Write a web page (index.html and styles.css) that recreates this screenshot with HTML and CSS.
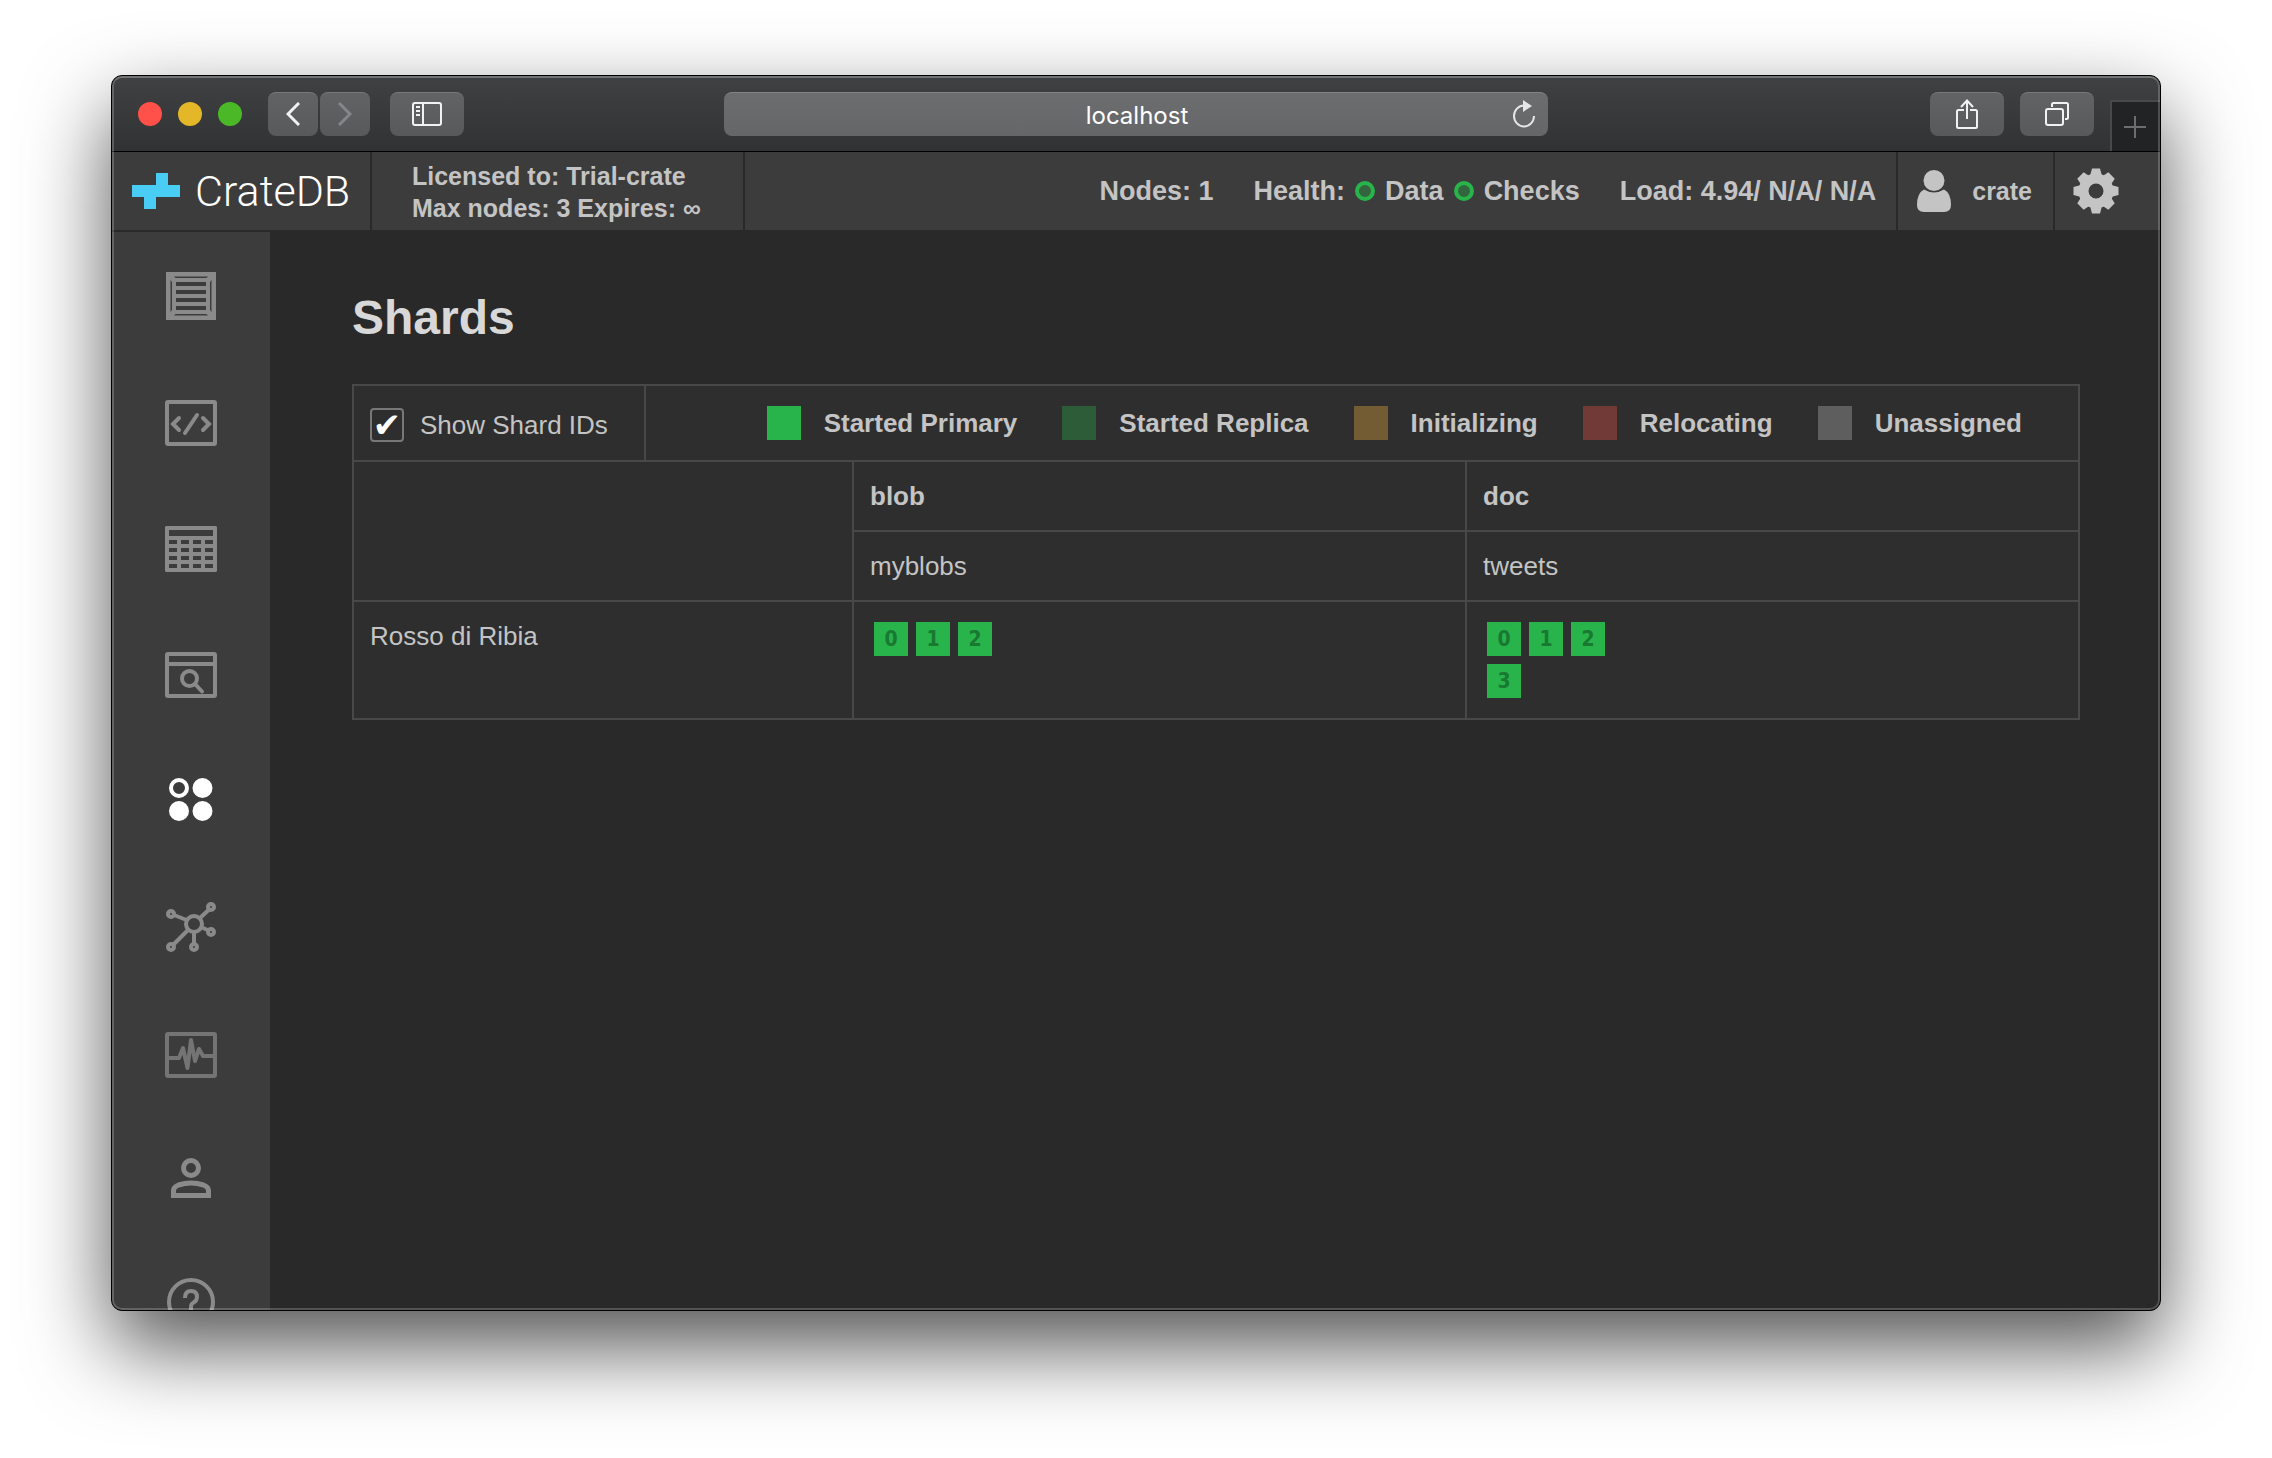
FILE: index.html
```html
<!DOCTYPE html>
<html lang="en">
<head>
<meta charset="utf-8">
<title>Shards - CrateDB</title>
<link rel="stylesheet" href="styles.css">
</head>
<body>
<div class="window">
  <div class="toolbar">
    <div class="toolbar-left">
      <div class="lights">
        <button class="light light-close" aria-label="Close"></button>
        <button class="light light-min" aria-label="Minimize"></button>
        <button class="light light-max" aria-label="Zoom"></button>
      </div>
      <div class="nav-pair">
        <button class="tool tool-nav" aria-label="Back">
          <svg width="14" height="24" viewBox="0 0 14 24" fill="none" stroke="#f2f2f2" stroke-width="3"><path d="M13 1 2 12l11 11"/></svg>
        </button>
        <button class="tool tool-nav" aria-label="Forward" disabled>
          <svg width="14" height="24" viewBox="0 0 14 24" fill="none" stroke="#85868a" stroke-width="3"><path d="M1 1l11 11L1 23"/></svg>
        </button>
      </div>
      <button class="tool" aria-label="Show sidebar">
        <svg width="30" height="24" viewBox="0 0 30 24" fill="none" stroke="#f2f2f2" stroke-width="2"><rect x="1" y="1" width="28" height="22" rx="2"/><path d="M11 1v22M4 5h4M4 9h4M4 13h4"/></svg>
      </button>
    </div>
    <div class="address">
      <input class="address-input" type="text" value="localhost" aria-label="Address">
      <button class="reload" aria-label="Reload">
        <svg width="24" height="30" viewBox="0 0 24 30"><path d="M12 6.500A10 10.500 0 1 0 22 17" fill="none" stroke="#e6e6e6" stroke-width="2"/><path d="M11 1l9 6-9 6z" fill="#e6e6e6"/></svg>
      </button>
    </div>
    <div class="toolbar-right">
      <button class="tool" aria-label="Share">
        <svg width="24" height="32" viewBox="0 0 24 32" fill="none" stroke="#f2f2f2" stroke-width="2"><path d="M9 12H3.500Q2 12 2 13.500V28.500Q2 30 3.500 30h17q1.500 0 1.500-1.500V13.500Q22 12 20.500 12H15M12 21V3M6 9l6-6.500L18 9"/></svg>
      </button>
      <button class="tool" aria-label="Show tabs">
        <svg width="26" height="26" viewBox="0 0 26 26" fill="none" stroke="#f2f2f2" stroke-width="2"><rect x="2" y="8" width="17" height="16" rx="2"/><path d="M8 6V3.500Q8 2 9.500 2h13Q24 2 24 3.500v13q0 1.500-1.500 1.500H21"/></svg>
      </button>
      <button class="new-tab" aria-label="New tab">
        <svg width="22" height="22" viewBox="0 0 22 22" stroke="#6c6d6f" stroke-width="2"><path d="M11 0v22M0 11h22"/></svg>
      </button>
    </div>
  </div>

  <header class="header">
    <a class="brand" href="#">
      <svg width="48" height="36" viewBox="0 0 48 36" fill="#49cdf4"><path d="M24 0h12v12h12v12H24v12H12V24H0V12h24z"/></svg>
      <span class="brand-name">CrateDB</span>
    </a>
    <div class="license">
      <div>Licensed to: Trial-crate</div>
      <div>Max nodes: 3 Expires: ∞</div>
    </div>
    <div class="status">
      <span>Nodes: 1</span>
      <span class="health">Health: <i class="ring"></i> Data <i class="ring"></i> Checks</span>
      <span>Load: 4.94/ N/A/ N/A</span>
    </div>
    <button class="user">
      <svg width="36" height="42" viewBox="0 0 36 42" fill="#c4c4c4"><ellipse cx="18" cy="10.500" rx="10.500" ry="10.500"/><path d="M8 19.500Q18 25.500 28 19.500Q35 23 35 35q0 7-7 7H8q-7 0-7-7Q1 23 8 19.500z"/></svg>
      crate
    </button>
    <button class="settings" aria-label="Settings">
      <svg width="46" height="46" viewBox="-23 -23 46 46" fill="#c4c4c4"><circle r="12.500" fill="none" stroke="#c4c4c4" stroke-width="10"/><path d="M-6-15l2-7.500h8l2 7.500zM-6 15l2 7.500h8l2-7.500zM-15-6l-7.500 2v8l7.500 2zM15-6l7.500 2v8l-7.500 2z"/><path transform="rotate(45)" d="M-6-15l1.500-7h9l1.500 7zM-6 15l1.500 7h9l1.500-7zM-15-6l-7 1.500v9l7 1.500zM15-6l7 1.500v9l-7 1.500z"/></svg>
    </button>
  </header>

  <div class="body">
    <nav class="sidebar" aria-label="Main">
      <a class="nav-item" href="#" aria-label="Overview">
        <svg class="icon" viewBox="0 0 54 54"><path fill="currentColor" fill-rule="evenodd" d="M2 3h50v48H2zM10 7.500l1.500 1.500h31l1.500-1.500zM6.500 11v32l1.500-2V13zM47.500 11l-1.500 2v28l1.500 2zM11.500 45l-1.500 1.500h34l-1.500-1.500zM12 13v4h30v-4zM12 21v4h30v-4zM12 29v4h30v-4zM12 37v4h30v-4z"/></svg>
      </a>
      <a class="nav-item" href="#" aria-label="Console">
        <svg class="icon line" viewBox="0 0 54 54"><rect x="3" y="7" width="48" height="42" rx="1"/><path stroke-linecap="round" d="M15 23l-6 6 6 6M33 20L21 38M39 23l6 6-6 6"/></svg>
      </a>
      <a class="nav-item" href="#" aria-label="Tables">
        <svg class="icon" viewBox="0 0 54 54"><path fill="currentColor" fill-rule="evenodd" d="M2 5h50l1 1v44l-1 1H2l-1-1V6zM5 9v6h44V9zM5 19v4h8v-4zM17 19v4h8v-4zM29 19v4h8v-4zM41 19v4h8v-4zM5 27v4h8v-4zM17 27v4h8v-4zM29 27v4h8v-4zM41 27v4h8v-4zM5 35v4h8v-4zM17 35v4h8v-4zM29 35v4h8v-4zM41 35v4h8v-4zM5 43v4h8v-4zM17 43v4h8v-4zM29 43v4h8v-4zM41 43v4h8v-4z"/></svg>
      </a>
      <a class="nav-item" href="#" aria-label="Views">
        <svg class="icon line" viewBox="0 0 54 54"><rect x="3" y="7" width="48" height="42" rx="1"/><path d="M3 17h48"/><circle cx="25.500" cy="31.500" r="7.500"/><path stroke-linecap="round" d="M31 37l7 7.500"/></svg>
      </a>
      <a class="nav-item active" href="#" aria-label="Shards" aria-current="page">
        <svg class="icon" viewBox="0 0 54 54" fill="currentColor"><circle cx="15" cy="15" r="8" fill="none" stroke="currentColor" stroke-width="4"/><circle cx="38.500" cy="15" r="10"/><circle cx="15" cy="38" r="10"/><circle cx="38.500" cy="38" r="10"/></svg>
      </a>
      <a class="nav-item" href="#" aria-label="Cluster">
        <svg class="icon line" viewBox="0 0 54 54"><circle cx="30" cy="25" r="8"/><circle cx="7" cy="15" r="3"/><circle cx="47" cy="8" r="3"/><circle cx="47" cy="33" r="3"/><circle cx="30" cy="48" r="3"/><circle cx="7" cy="48" r="3"/><path d="M10 16l12.500 5M36 19l9-8.500M37 28l7.500 3.500M30 33v12M24 31L9.500 45.500"/></svg>
      </a>
      <a class="nav-item dim" href="#" aria-label="Monitoring">
        <svg class="icon line" viewBox="0 0 54 54"><rect x="3" y="9" width="48" height="42" rx="1"/><path stroke-linejoin="round" d="M3 33h12l4-10 4.500 20L27 15l4 21 4-12 4 7h12"/></svg>
      </a>
      <a class="nav-item" href="#" aria-label="Users">
        <svg class="icon" viewBox="0 0 54 54" fill="none" stroke="currentColor" stroke-width="5"><circle cx="27" cy="17" r="7.500"/><path d="M9.500 44.500v-5q0-3.500 5-5.500 12.500-4 25 0 5 2 5 5.500v5z"/></svg>
      </a>
      <a class="nav-item" href="#" aria-label="Help">
        <svg class="icon line" viewBox="0 0 54 54"><circle cx="27" cy="25" r="22"/><path d="M21 21q0-7 6-7t6 6q0 4-4 6-2 1-2 4v4"/></svg>
      </a>
    </nav>

    <main class="content">
      <h1 class="title">Shards</h1>
      <div class="options">
        <label class="toggle"><input class="check" type="checkbox" checked>Show Shard IDs</label>
        <ul class="legend">
          <li class="legend-item"><i class="swatch primary"></i>Started Primary</li>
          <li class="legend-item"><i class="swatch replica"></i>Started Replica</li>
          <li class="legend-item"><i class="swatch initializing"></i>Initializing</li>
          <li class="legend-item"><i class="swatch relocating"></i>Relocating</li>
          <li class="legend-item"><i class="swatch unassigned"></i>Unassigned</li>
        </ul>
      </div>
      <table class="shards">
        <colgroup><col class="col-node"><col><col></colgroup>
        <thead>
          <tr><td rowspan="2"></td><th scope="col">blob</th><th scope="col">doc</th></tr>
          <tr><td>myblobs</td><td>tweets</td></tr>
        </thead>
        <tbody>
          <tr>
            <td>Rosso di Ribia</td>
            <td class="shard-cell"><div class="shard-grid"><span class="shard">0</span><span class="shard">1</span><span class="shard">2</span></div></td>
            <td class="shard-cell"><div class="shard-grid"><span class="shard">0</span><span class="shard">1</span><span class="shard">2</span><span class="shard">3</span></div></td>
          </tr>
        </tbody>
      </table>
    </main>
  </div>
</div>
</body>
</html>
```
FILE: styles.css
```css
* {
  box-sizing: border-box;
}

body {
  margin: 0;
  padding: 75px 111px 147px;
  height: 100vh;
  background: #fff;
  color: #c4c4c4;
  font-family: "Liberation Sans", Arial, sans-serif;
  font-size: 26px;
  line-height: 36px;
}

button {
  margin: 0;
  padding: 0;
  border: 0;
  background: none;
  color: inherit;
  font: inherit;
}

svg {
  display: block;
  flex: none;
}

.window {
  position: relative;
  display: flex;
  flex-direction: column;
  height: 100%;
  border: 1px solid #000;
  border-radius: 11px;
  background: #292929;
  overflow: hidden;
  box-shadow: 0 36px 84px rgba(0, 0, 0, 0.68);
}

/* Light inner edge drawn over the window's content */
.window::after {
  content: "";
  position: absolute;
  inset: 0;
  border: 2px solid rgba(255, 255, 255, 0.2);
  border-top-color: rgba(255, 255, 255, 0.27);
  border-radius: 10px;
  pointer-events: none;
}

/* Browser toolbar */
.toolbar {
  display: grid;
  grid-template-columns: 1fr minmax(0, 824px) 1fr;
  align-items: center;
  flex: none;
  height: 76px;
  border-bottom: 1px solid #000;
  background: linear-gradient(#3f4143, #313234);
}

.toolbar-left {
  display: flex;
  align-items: center;
  padding-left: 26px;
  gap: 20px;
}

.lights {
  display: flex;
  gap: 16px;
  margin-right: 6px;
}

.light {
  width: 24px;
  height: 24px;
  border-radius: 50%;
}

.light-close { background: #ff5049; }
.light-min { background: #e3b727; }
.light-max { background: #4bb927; }

.nav-pair {
  display: flex;
  gap: 2px;
}

.tool {
  display: grid;
  place-items: center;
  width: 74px;
  height: 44px;
  border-top: 1px solid #77797b;
  border-radius: 8px;
  background: linear-gradient(#626365, #58595b);
}

.tool-nav {
  width: 50px;
}

.address {
  display: flex;
  align-items: center;
  height: 44px;
  padding: 0 12px;
  border-top: 1px solid #828385;
  border-radius: 8px;
  background: linear-gradient(#6c6d6f, #656668);
}

.address-input {
  flex: 1;
  min-width: 0;
  height: 42px;
  margin: 0;
  padding: 2px 0 0 26px;
  border: 0;
  outline: 0;
  background: none;
  color: #fff;
  font-family: Inter, sans-serif;
  font-size: 24px;
  text-align: center;
}

.toolbar-right {
  display: flex;
  align-items: center;
  justify-content: flex-end;
  height: 75px;
  gap: 16px;
}

.new-tab {
  display: grid;
  place-items: center;
  align-self: flex-end;
  width: 50px;
  height: 51px;
  padding-right: 2px;
  border-top: 2px solid #48494b;
  border-left: 2px solid #48494b;
  background: #222325;
}

/* Application header */
.header {
  display: flex;
  flex: none;
  height: 80px;
  border-bottom: 2px solid #292929;
  background: #3c3c3c;
  font-size: 25px;
  font-weight: bold;
}

.brand {
  display: flex;
  align-items: center;
  gap: 15px;
  width: 260px;
  padding-left: 20px;
  border-right: 2px solid #292929;
  color: #fff;
  text-decoration: none;
}

.brand-name {
  font-family: Roboto, sans-serif;
  font-size: 43px;
  font-weight: 300;
}

.license {
  padding: 8px 42px 0 40px;
  border-right: 2px solid #292929;
  line-height: 32px;
  white-space: nowrap;
}

.status {
  display: flex;
  align-items: center;
  justify-content: flex-end;
  flex: 1;
  gap: 40px;
  padding-right: 20px;
  font-size: 27px;
  white-space: nowrap;
}

.health {
  display: flex;
  align-items: center;
  gap: 10px;
}

.ring {
  width: 20px;
  height: 20px;
  border: 4px solid #28b44a;
  border-radius: 50%;
  background: #33663f;
}

.user {
  display: flex;
  align-items: center;
  gap: 20px;
  padding: 0 21px 0 18px;
  border-left: 2px solid #292929;
}

.settings {
  padding: 0 41px 0 18px;
  border-left: 2px solid #292929;
}

/* Sidebar */
.body {
  display: flex;
  flex: 1;
  min-height: 0;
}

.sidebar {
  flex: none;
  width: 158px;
  padding-top: 1px;
  background: #3c3c3c;
  overflow: hidden;
}

.nav-item {
  display: grid;
  place-items: center;
  height: 126px;
  color: #8a8a8a;
}

.nav-item.active { color: #fff; }
.nav-item.dim { color: #747474; }

.icon {
  width: 54px;
  height: 54px;
}

.line {
  fill: none;
  stroke: currentColor;
  stroke-width: 4px;
}

/* Content */
.content {
  flex: 1;
  min-width: 0;
  padding: 58px 80px 0 82px;
}

.title {
  margin: 0 0 38px;
  color: #d8d8d8;
  font-size: 48px;
  line-height: 56px;
}

.options {
  display: flex;
  height: 76px;
  border: 2px solid #484848;
  border-bottom: 0;
  background: #2e2e2e;
}

.toggle {
  display: flex;
  align-items: center;
  gap: 16px;
  padding: 4px 36px 0 16px;
  border-right: 2px solid #484848;
}

.check {
  appearance: none;
  display: grid;
  place-items: center;
  width: 34px;
  height: 34px;
  margin: 0;
  border: 2px solid #787878;
  border-radius: 4px;
  color: #fff;
}

.check:checked::after {
  content: "✔";
  font-family: "DejaVu Sans", sans-serif;
  font-size: 34px;
  line-height: 30px;
}

.legend {
  display: flex;
  align-items: center;
  justify-content: flex-end;
  flex: 1;
  gap: 45px;
  margin: 0;
  padding: 0 56px 0 0;
  list-style: none;
  font-weight: bold;
}

.legend-item {
  display: flex;
  align-items: center;
  gap: 23px;
}

.swatch {
  width: 34px;
  height: 34px;
}

.primary { background: #28b44a; }
.replica { background: #2d5c38; }
.initializing { background: #735c33; }
.relocating { background: #713a37; }
.unassigned { background: #5e5e5e; }

.shards {
  width: 100%;
  table-layout: fixed;
  border-collapse: collapse;
  background: #2e2e2e;
}

.col-node {
  width: 500px;
}

.shards th,
.shards td {
  padding: 16px;
  border: 2px solid #484848;
  text-align: left;
  vertical-align: top;
}

.shards .shard-cell {
  padding: 20px;
}

.shard-grid {
  display: grid;
  grid-template-columns: repeat(3, 34px);
  gap: 8px;
}

.shard {
  height: 34px;
  background: #28b44a;
  color: #197832;
  font-family: "DejaVu Sans Condensed", "DejaVu Sans", sans-serif;
  font-size: 21px;
  font-weight: bold;
  line-height: 34px;
  text-align: center;
}
```
